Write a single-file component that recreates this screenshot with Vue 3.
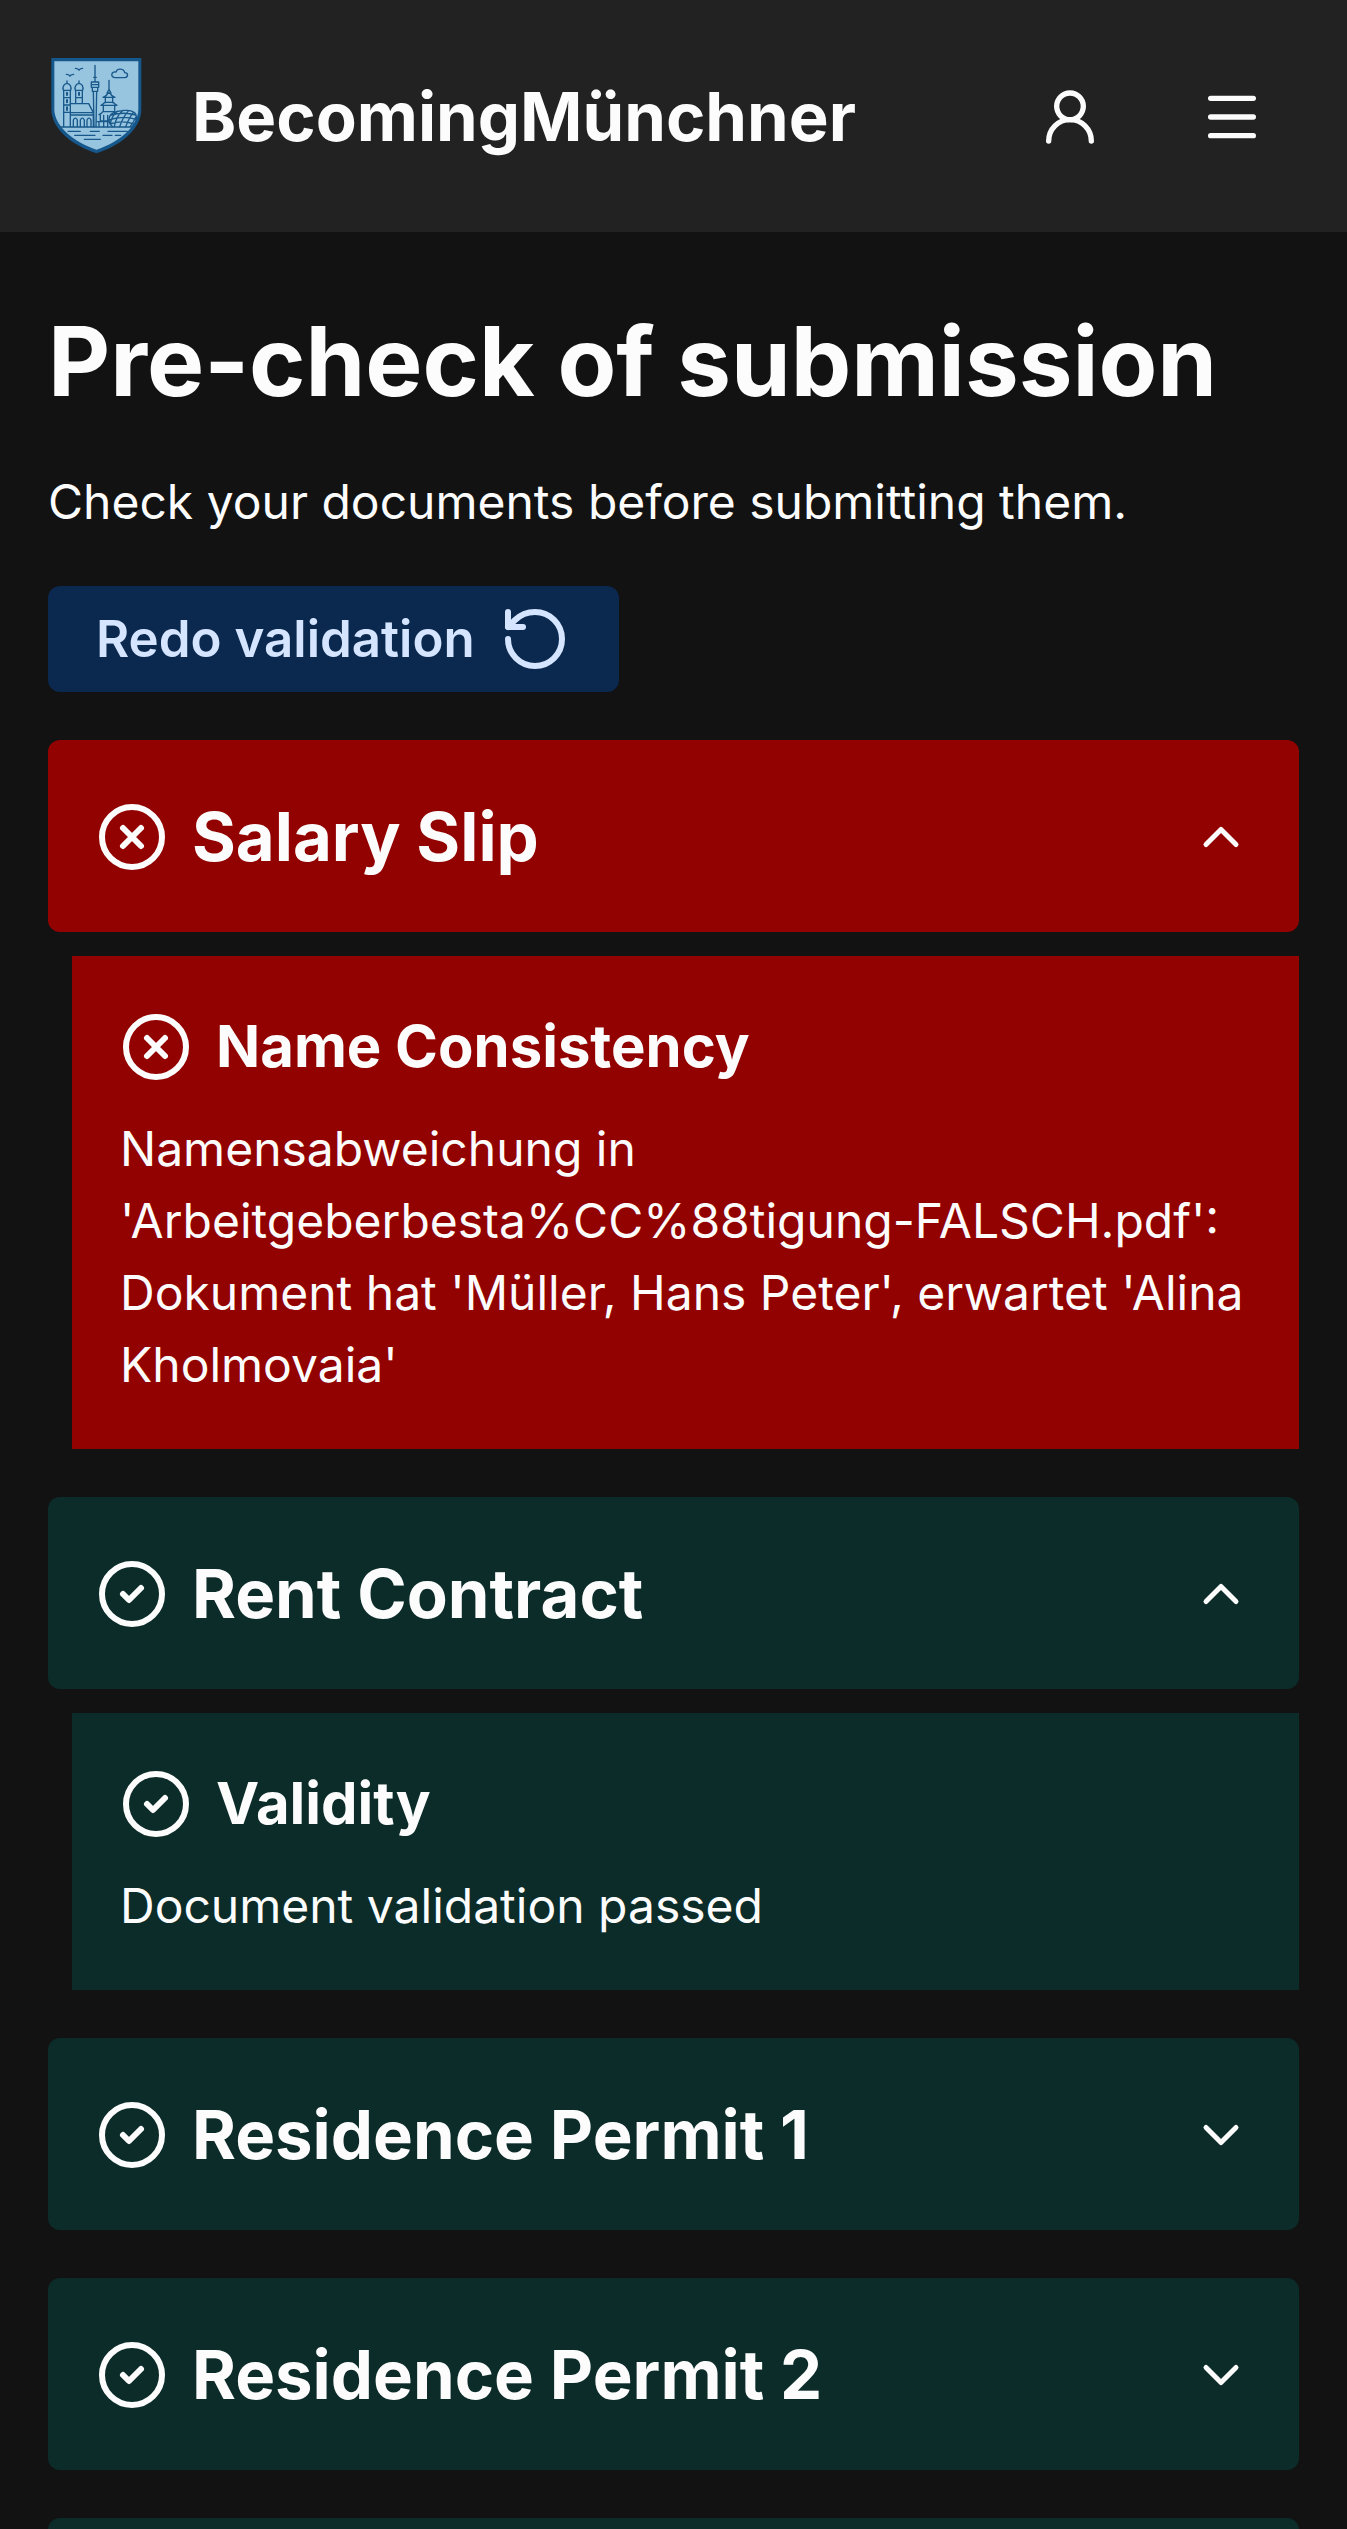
<template>
    <div class="page">
        <header class="header">
            <a href="#" class="brand">
                <!-- shield logo -->
                <svg class="logo" viewBox="24 15 288 318" aria-hidden="true">
                    <path class="shield" d="M34 42H304V196C304 256 240 306 169.500 328C99 306 34 256 34 196Z" />
                    <path class="shield-inner" d="M43 52H295V196C295 247 236 296 169.500 317C103 296 43 247 43 196Z" />
                    <g class="skyline">
                        <!-- birds and cloud -->
                        <path d="M79 91Q86 91 90 96Q94 91 101 91M106 73Q113 73 117 78Q121 73 128 73" />
                        <path d="M224 101H254C266 100 265 86 254 86C252 73 232 71 228 84C214 82 210 98 224 101Z" />
                        <!-- church towers -->
                        <path d="M81 111V118M70 139C66 127 74 119 81 118C88 119 96 127 92 139ZM71 139V248M91 139V248M71 161H91M71 183H91M71 205H91" />
                        <path d="M117 111V118M106 139C102 127 110 119 117 118C124 119 132 127 128 139ZM107 139V178M127 139V178M107 161H127" />
                        <path class="thick" d="M81 146V153M81 168V175M81 190V198M117 146V153" />
                        <path d="M91 179H146L160 206V248M91 206H160M93 213H160M100 248V228Q106 217 112 228V248M121 248V228Q127 217 133 228V248M141 248V228Q147 217 153 228V248" />
                        <!-- tv tower -->
                        <path d="M165 64V114M154 114H176V130H154ZM154 122H176M157 130V142H173V130M160 142L162 248M170 142L168 248M161 100H169" />
                        <!-- pagoda -->
                        <path d="M207 109V140M201 147L207 136L213 147ZM189 160Q200 157 203 148H211Q214 157 225 160ZM196 161V176M218 161V176M183 184Q192 180 194 175H220Q222 180 231 184ZM190 185V203M224 185V199M177 212Q186 208 188 203H224M181 213V231H208M171 233H207M177 233V248M191 214V248M203 214V248" />
                        <!-- stadium -->
                        <path d="M218 248C200 235 204 211 226 204C249 196 281 197 288 212C293 226 285 239 276 248M211 214Q250 202 288 213M206 228Q248 213 288 226M210 240Q246 227 282 240M232 202Q215 216 211 239M249 199Q229 216 223 247M266 200Q249 218 239 248M280 205Q268 220 257 248M288 218Q281 234 271 247" />
                        <!-- water -->
                        <path d="M59 249H281M84 262H121M151 262H178M204 262H262M104 274H165M189 274H216M226 274H242M133 286H181" />
                    </g>
                </svg>
                <span class="brand-name">BecomingMünchner</span>
            </a>
            <nav class="nav">
                <button type="button" class="icon-btn" aria-label="Account">
                    <svg class="icon" viewBox="0 0 24 24" aria-hidden="true">
                        <circle cx="12" cy="8" r="5" />
                        <path d="M20 21a8 8 0 0 0-16 0" />
                    </svg>
                </button>
                <button type="button" class="icon-btn" aria-label="Menu">
                    <svg class="icon" viewBox="0 0 24 24" aria-hidden="true">
                        <path d="M4 5h16M4 12h16M4 19h16" />
                    </svg>
                </button>
            </nav>
        </header>

        <main class="content">
            <h1>Pre-check of submission</h1>
            <p class="intro">Check your documents before submitting them.</p>

            <button type="button" class="redo-btn">
                Redo validation
                <svg class="icon large" viewBox="0 0 24 24" aria-hidden="true">
                    <path d="M3 12a9 9 0 1 0 9-9 9.750 9.750 0 0 0-6.740 2.740L3 8" />
                    <path d="M3 3v5h5" />
                </svg>
            </button>

            <section v-for="doc in documents" :key="doc.title" :class="['document', doc.status]">
                <h2>
                    <button type="button" class="document-head" :aria-expanded="doc.open" @click="toggle(doc)">
                        <svg class="icon large" viewBox="0 0 24 24" aria-hidden="true">
                            <circle cx="12" cy="12" r="10" />
                            <path :d="statusPaths[doc.status]" />
                        </svg>
                        <span class="document-title">{{ doc.title }}</span>
                        <svg class="icon chevron" viewBox="0 0 24 24" aria-hidden="true">
                            <path :d="doc.open ? 'm18 15-6-6-6 6' : 'm6 9 6 6 6-6'" />
                        </svg>
                    </button>
                </h2>

                <template v-if="doc.open">
                    <div v-for="check in doc.checks" :key="check.title" class="check">
                        <h3>
                            <svg class="icon large" viewBox="0 0 24 24" aria-hidden="true">
                                <circle cx="12" cy="12" r="10" />
                                <path :d="statusPaths[doc.status]" />
                            </svg>
                            {{ check.title }}
                        </h3>
                        <p>{{ check.message }}</p>
                    </div>
                </template>
            </section>

            <!-- next document, still loading -->
            <div class="placeholder" aria-busy="true"></div>
        </main>
    </div>
</template>

<script setup>
import { ref } from 'vue'

// icon strokes inside the status circle
const statusPaths = {
    failed: 'm15 9-6 6M9 9l6 6',
    passed: 'm9 12 2 2 4-4'
}

const passedCheck = { title: 'Validity', message: 'Document validation passed' }

const documents = ref([
    {
        title: 'Salary Slip',
        status: 'failed',
        open: true,
        checks: [
            {
                title: 'Name Consistency',
                message: "Namensabweichung in 'Arbeitgeberbesta%CC%88tigung-FALSCH.pdf': Dokument hat 'Müller, Hans Peter', erwartet 'Alina Kholmovaia'"
            }
        ]
    },
    { title: 'Rent Contract', status: 'passed', open: true, checks: [passedCheck] },
    { title: 'Residence Permit 1', status: 'passed', open: false, checks: [passedCheck] },
    { title: 'Residence Permit 2', status: 'passed', open: false, checks: [passedCheck] }
])

// open or close a document
const toggle = (doc) => {
    doc.open = !doc.open
}
</script>

<style>
body {
    margin: 0;
    background: #121212;
}
</style>

<style scoped>
.page {
    height: 100vh;
    overflow-x: hidden;
    overflow-y: auto;
    scrollbar-width: none;
    background: #121212;
    color: #fcfcfc;
    font-family: Inter, "Liberation Sans", sans-serif;
    font-size: 48px;
    line-height: 72px;
}

h1,
h2,
h3,
p {
    margin: 0;
}

button {
    border: none;
    padding: 0;
    background: none;
    color: inherit;
    font: inherit;
    cursor: pointer;
}

.header {
    display: flex;
    align-items: center;
    justify-content: space-between;
    padding: 49px 51px 47px 48px;
    background: #222222;
}

.brand {
    display: flex;
    align-items: center;
    gap: 48px;
    color: inherit;
    text-decoration: none;
}

.logo {
    align-self: flex-start;
    width: 96px;
    height: 106px;
    flex-shrink: 0;
}

.shield {
    fill: #16588c;
}

.shield-inner {
    fill: #97c4df;
}

.skyline {
    fill: none;
    stroke: #18588a;
    stroke-width: 4;
    stroke-linecap: round;
    stroke-linejoin: round;
}

.thick {
    stroke-width: 6;
}

.brand-name {
    font-size: 67px;
    font-weight: 700;
    line-height: 136px;
}

.nav {
    display: flex;
    gap: 34px;
}

.icon-btn {
    display: flex;
    padding: 32px;
}

.icon {
    width: 64px;
    height: 64px;
    flex-shrink: 0;
    fill: none;
    stroke: currentColor;
    stroke-width: 2;
    stroke-linecap: round;
    stroke-linejoin: round;
}

.icon.large {
    width: 72px;
    height: 72px;
}

.icon.chevron {
    width: 60px;
    height: 60px;
}

.content {
    padding: 72px 48px 48px;
}

h1 {
    margin-bottom: 48px;
    font-size: 96px;
    font-weight: 700;
    line-height: 114px;
}

.intro {
    margin-bottom: 48px;
}

.redo-btn {
    display: flex;
    align-items: center;
    gap: 24px;
    height: 106px;
    padding: 0 48px;
    border-radius: 12px;
    background: #0b284e;
    color: #d5e5ff;
    font-size: 51px;
    font-weight: 600;
}

.document {
    margin-top: 48px;
}

.failed .document-head,
.failed .check {
    background: #920201;
}

.passed .document-head,
.passed .check,
.placeholder {
    background: #0b2c29;
}

.document-head {
    display: flex;
    align-items: center;
    gap: 24px;
    width: 100%;
    padding: 49px 48px 47px;
    border-radius: 12px;
    font-size: 67px;
    font-weight: 700;
    line-height: 96px;
    text-align: left;
}

.document-title {
    flex: 1;
}

.placeholder {
    height: 192px;
    margin-top: 48px;
    border-radius: 12px;
}

.check {
    margin: 24px 0 0 24px;
    padding: 48px;
}

.check h3 {
    display: flex;
    align-items: center;
    gap: 24px;
    margin-bottom: 24px;
    font-size: 58px;
    font-weight: 700;
    line-height: 85px;
}
</style>
